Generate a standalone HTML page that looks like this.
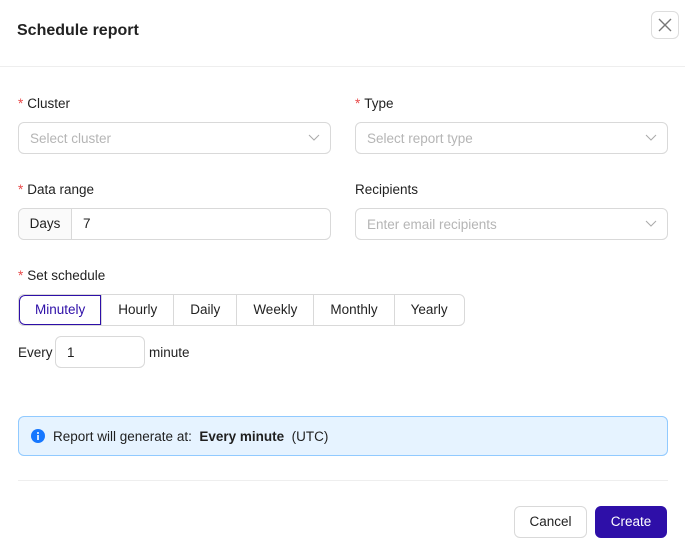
<!DOCTYPE html>
<html><head><style>
*{box-sizing:border-box;margin:0;padding:0}
body{width:685px;height:560px;background:#fff;font-family:"Liberation Sans",sans-serif;font-size:13.5px;color:#1f1f1f;position:relative;overflow:hidden}
.abs{position:absolute}
.title{left:17px;top:22px;font-size:16px;font-weight:bold;color:#222}
.close{left:651px;top:11px;width:28px;height:28px;border:1px solid #ddd;border-radius:6px}
.hr{left:0;width:685px;height:1px;background:#eee}
.lbl{font-size:13.5px;color:#222}
.lbl b{color:#e84a4a;font-weight:normal;margin-right:4px}
.inp{height:32px;border:1px solid #d9d9d9;border-radius:6px;color:#b5b5b5;padding:8px 11px;font-size:13.5px}
.chev{position:absolute;right:10px;top:9px}
.seg{left:18px;top:294px;height:32px;display:flex;border:1px solid #d9d9d9;border-radius:6px;overflow:hidden}
.seg div{padding:0 16px;line-height:30px;border-left:1px solid #d9d9d9;color:#222}
.seg div:first-child{border:1px solid #2e0fa8;border-radius:6px 0 0 6px;color:#2e0fa8;line-height:28px;padding:0 15px}
.info{left:18px;top:416px;width:650px;height:40px;background:#e6f3ff;border:1px solid #91caff;border-radius:6px}
.btn{height:32px;border-radius:6px;line-height:30px;text-align:center;font-size:13.5px}
</style></head><body>
<div class="abs title">Schedule report</div>
<div class="abs close"><svg width="26" height="26"><path d="M7 7L19 19M19 7L7 19" stroke="#777" stroke-width="1.4"/></svg></div>
<div class="abs hr" style="top:66px"></div>

<div class="abs lbl" style="left:18px;top:96px"><b>*</b>Cluster</div>
<div class="abs lbl" style="left:355px;top:96px"><b>*</b>Type</div>
<div class="abs inp" style="left:18px;top:122px;width:313px">Select cluster<svg class="chev" width="12" height="12"><path d="M1 3L6 8L11 3" fill="none" stroke="#aaa"/></svg></div>
<div class="abs inp" style="left:355px;top:122px;width:313px">Select report type<svg class="chev" width="12" height="12"><path d="M1 3L6 8L11 3" fill="none" stroke="#aaa"/></svg></div>

<div class="abs lbl" style="left:18px;top:182px"><b>*</b>Data range</div>
<div class="abs lbl" style="left:355px;top:182px">Recipients</div>
<div class="abs" style="left:18px;top:208px;width:313px;height:32px;border:1px solid #d9d9d9;border-radius:6px;display:flex">
 <div style="width:53px;background:#fafafa;border-right:1px solid #d9d9d9;line-height:30px;text-align:center;border-radius:6px 0 0 6px">Days</div>
 <div style="padding-left:11px;line-height:30px">7</div></div>
<div class="abs inp" style="left:355px;top:208px;width:313px">Enter email recipients<svg class="chev" width="12" height="12"><path d="M1 3L6 8L11 3" fill="none" stroke="#aaa"/></svg></div>

<div class="abs lbl" style="left:18px;top:268px"><b>*</b>Set schedule</div>
<div class="abs seg"><div>Minutely</div><div>Hourly</div><div>Daily</div><div>Weekly</div><div>Monthly</div><div>Yearly</div></div>

<div class="abs" style="left:18px;top:345px">Every</div>
<div class="abs" style="left:55px;top:336px;width:90px;height:32px;border:1px solid #d9d9d9;border-radius:6px;padding:8px 11px">1</div>
<div class="abs" style="left:149px;top:345px">minute</div>

<div class="abs info">
 <svg class="abs" style="left:12px;top:12px" width="14" height="14"><circle cx="7" cy="7" r="7" fill="#1677ff"/><rect x="6.2" y="6" width="1.6" height="5" fill="#fff"/><circle cx="7" cy="4" r="1" fill="#fff"/></svg>
 <div class="abs" style="left:34px;top:12px">Report will generate at:&nbsp; <b>Every minute</b>&nbsp; (UTC)</div>
</div>
<div class="abs hr" style="top:480px;left:18px;width:650px"></div>
<div class="abs btn" style="left:514px;top:506px;width:73px;border:1px solid #d9d9d9">Cancel</div>
<div class="abs btn" style="left:595px;top:506px;width:72px;background:#2e0fa8;color:#fff;border:1px solid #2e0fa8">Create</div>
</body></html>
